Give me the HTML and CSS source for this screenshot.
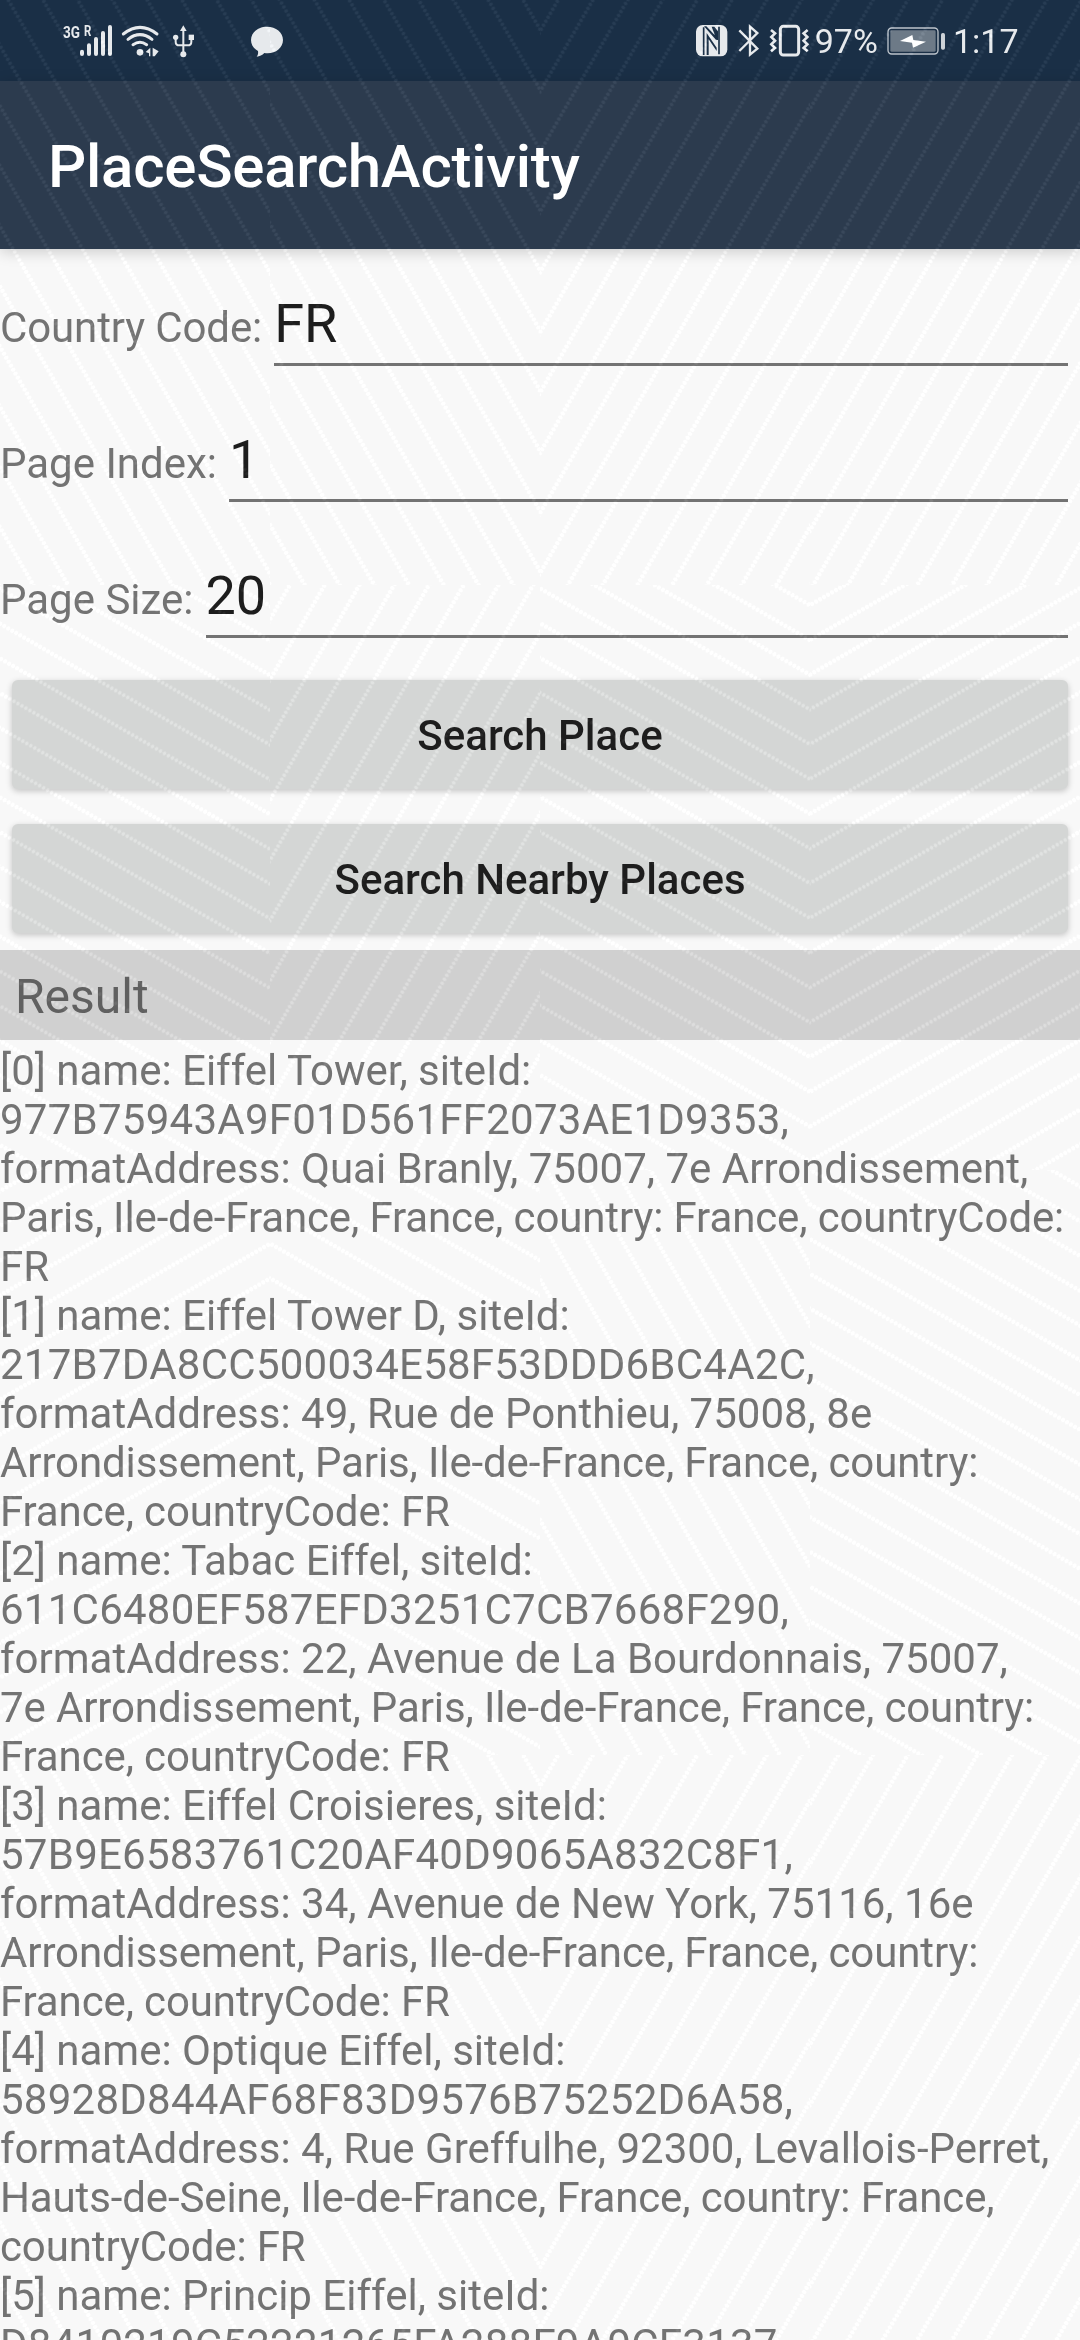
FILE: index.html
```html
<!DOCTYPE html>
<html lang="en">
<head>
<meta charset="utf-8">
<title>PlaceSearchActivity</title>
<link rel="stylesheet" href="styles.css">
</head>
<body>
<div class="screen">
  <header class="status-bar">
    <div class="status-group">
      <svg class="icon signal" viewBox="66 70 156 100">
        <text class="net" x="69" y="113" font-size="52" textLength="51" lengthAdjust="spacingAndGlyphs">3G</text>
        <text class="net" x="132" y="107" font-size="46" textLength="22" lengthAdjust="spacingAndGlyphs">R</text>
        <path d="M126 153v7M147 134v26M168 115v45M189 97v63M210 79v81" stroke="#e6e9ec" stroke-width="12" stroke-linecap="round"/>
      </svg>
      <svg class="icon wifi" viewBox="242 70 116 100" fill="none" stroke="#e6e9ec" stroke-width="9" stroke-linecap="round">
        <path d="M249 100Q299 60 350 100M263 116Q299 88 335 116M278 132Q299 118 319 132"/>
        <circle cx="299" cy="155" r="10" fill="#e6e9ec" stroke="none"/>
        <path d="M316 154l14-13v26h-4v-9zM337 141l18 11-12 15h-6z" fill="#e6e9ec" stroke="none"/>
      </svg>
      <svg class="icon usb" viewBox="395 70 70 100" fill="none" stroke="#e6e9ec" stroke-width="6">
        <path d="M429 88V157M406 115v8q0 11 11 11h25q11 0 11-11v-8"/>
        <path d="M429 74l10 17h-20z" fill="#e6e9ec" stroke="none"/>
        <circle cx="406" cy="110" r="8" fill="#e6e9ec" stroke="none"/>
        <path d="M445 102h16v16h-16z" fill="#e6e9ec" stroke="none"/>
        <circle cx="429" cy="161" r="9" fill="#e6e9ec" stroke="none"/>
      </svg>
      <svg class="icon chat" viewBox="634 70 98 100" fill="#e6e9ec">
        <path d="M682 78c27 0 48 17 48 40s-21 40-46 40c-4 0-7 0-10-1-6 7-14 10-23 11 4-5 5-11 4-17-13-7-21-19-21-33 0-23 21-40 48-40z"/>
      </svg>
    </div>
    <div class="status-group">
      <svg class="icon nfc" viewBox="46 70 96 100">
        <rect x="46" y="73" width="94" height="94" rx="20" fill="#e6e9ec"/>
        <path d="M69 80V163M115 78V161" fill="none" stroke="#1a2f46" stroke-width="5"/>
        <path d="M70 77h7L107 108V119zM78 163V97L108 141V151L84 116V163zM93 78h8L112 92V118h-4z" fill="#1a2f46"/>
      </svg>
      <svg class="icon bt" viewBox="170 70 66 100" fill="none" stroke="#e6e9ec" stroke-width="7">
        <path d="M174 89L228 144L206 162V78L228 97L174 151"/>
      </svg>
      <svg class="icon vibrate" viewBox="264 70 122 100" fill="none" stroke="#e6e9ec">
        <rect x="298" y="77" width="55" height="86" rx="9" stroke-width="9"/>
        <path d="M270 88l12 10-11 11 11 11-11 11 11 11-12 10M380 88l-12 10 11 11-11 11 11 11-11 11 12 10" stroke-width="8"/>
      </svg>
      <span class="percent">97%</span>
      <svg class="icon battery" viewBox="617 70 178 100">
        <rect x="620" y="82" width="150" height="78" rx="11" fill="none" stroke="#bdc4cb" stroke-width="4"/>
        <rect x="627" y="89" width="136" height="64" rx="4" fill="#6d7a87"/>
        <path d="M656 121l37-18 3 15 38 5-39 18-3-15z" fill="#fff"/>
        <rect x="779" y="97" width="12" height="50" rx="5" fill="#cdd2d7"/>
      </svg>
      <span class="clock">1:17</span>
    </div>
  </header>
  <div class="app-bar"><h1>PlaceSearchActivity</h1></div>
  <main>
    <label class="field"><span class="tight">Country Code:</span><span class="value">FR</span></label>
    <label class="field"><span>Page Index:</span><span class="value">1</span></label>
    <label class="field"><span>Page Size:</span><span class="value">20</span></label>
    <div class="actions">
      <button type="button">Search Place</button>
      <button type="button">Search Nearby Places</button>
    </div>
    <h2>Result</h2>
    <p class="results">[0] name: Eiffel Tower, siteId:<br>
<span class="site-id">977B75943A9F01D561FF2073AE1D9353,</span><br>
formatAddress: Quai Branly, 75007, 7e Arrondissement,<br>
<span class="tight">Paris, Ile-de-France, France, country: France, countryCode:</span><br>
FR<br>
[1] name: Eiffel Tower D, siteId:<br>
<span class="site-id">217B7DA8CC500034E58F53DDD6BC4A2C,</span><br>
formatAddress: 49, Rue de Ponthieu, 75008, 8e<br>
<span class="tight">Arrondissement, Paris, Ile-de-France, France, country:</span><br>
<span class="tight">France, countryCode: FR</span><br>
[2] name: Tabac Eiffel, siteId:<br>
<span class="site-id">611C6480EF587EFD3251C7CB7668F290,</span><br>
formatAddress: 22, Avenue de La Bourdonnais, 75007,<br>
<span class="tight">7e Arrondissement, Paris, Ile-de-France, France, country:</span><br>
<span class="tight">France, countryCode: FR</span><br>
[3] name: Eiffel Croisieres, siteId:<br>
<span class="site-id">57B9E6583761C20AF40D9065A832C8F1,</span><br>
formatAddress: 34, Avenue de New York, 75116, 16e<br>
<span class="tight">Arrondissement, Paris, Ile-de-France, France, country:</span><br>
<span class="tight">France, countryCode: FR</span><br>
[4] name: Optique Eiffel, siteId:<br>
<span class="site-id">58928D844AF68F83D9576B75252D6A58,</span><br>
formatAddress: 4, Rue Greffulhe, 92300, Levallois-Perret,<br>
<span class="tight">Hauts-de-Seine, Ile-de-France, France, country: France,</span><br>
<span class="tight">countryCode: FR</span><br>
[5] name: Princip Eiffel, siteId:<br>
<span class="site-id">D8410219C52221265FA288F9A9CF3137,</span></p>
  </main>
  <!-- Dotted watermark: 4 x 4 tiles, each filled with one line direction -->
  <svg class="watermark" viewBox="0 0 1080 2340" aria-hidden="true">
    <defs>
      <pattern id="dots" width="4.6" height="30.1" patternUnits="userSpaceOnUse">
        <ellipse cx="2.3" cy="2.3" rx="1.6" ry="2"/>
      </pattern>
      <pattern id="a0" href="#dots" patternTransform="translate(13.5 250) rotate(60) translate(0 -2.3)"/>
      <pattern id="a1" href="#dots" patternTransform="translate(541 573) rotate(60) translate(0 -2.3)"/>
      <pattern id="a2" href="#dots" patternTransform="translate(540 573) rotate(120) translate(0 -2.3)"/>
      <pattern id="a3" href="#dots" patternTransform="translate(832.7 250) rotate(120) translate(0 -2.3)"/>
      <pattern id="b0" href="#dots" patternTransform="translate(0 693.3) rotate(30) translate(0 -2.3)"/>
      <pattern id="b1" href="#dots" patternTransform="translate(270 860) rotate(120) translate(0 -2.3)"/>
      <pattern id="b2" href="#dots" patternTransform="translate(540 623.3) rotate(30) translate(0 -2.3)"/>
      <pattern id="b3" href="#dots" patternTransform="translate(810 605) rotate(150) translate(0 -2.3)"/>
      <pattern id="c0" href="#dots" patternTransform="translate(270 1243.6) rotate(150) translate(0 -2.3)"/>
      <pattern id="c1" href="#dots" patternTransform="translate(270 1243.6) rotate(30) translate(0 -2.3)"/>
      <pattern id="c2" href="#dots" patternTransform="translate(606 1755) rotate(60) translate(0 -2.3)"/>
      <pattern id="c3" href="#dots" patternTransform="translate(810 1274) rotate(30) translate(0 -2.3)"/>
      <g id="steep">
        <path d="M0 0h270v585H0z" fill="url(#a0)"/>
        <path d="M270 0h270v585H270z" fill="url(#a1)"/>
        <path d="M540 0h270v585H540z" fill="url(#a2)"/>
        <path d="M810 0h270v585H810z" fill="url(#a3)"/>
      </g>
    </defs>
    <use href="#steep"/>
    <path d="M0 585h270v585H0z" fill="url(#b0)"/>
    <path d="M270 585h270v585H270z" fill="url(#b1)"/>
    <path d="M540 585h270v585H540z" fill="url(#b2)"/>
    <path d="M810 585h270v585H810z" fill="url(#b3)"/>
    <path d="M0 1170h270v585H0z" fill="url(#c0)"/>
    <path d="M270 1170h270v585H270z" fill="url(#c1)"/>
    <path d="M540 1170h270v585H540z" fill="url(#c2)"/>
    <path d="M810 1170h270v585H810z" fill="url(#c3)"/>
    <use href="#steep" y="1755"/>
  </svg>
</div>
</body>
</html>
```

FILE: styles.css
```css
* { box-sizing: border-box; }
body { margin: 0; }
.screen {
  position: relative;
  width: 1080px;
  height: 2340px;
  overflow: hidden;
  background: #f8f8f8;
  color: #737373;
  font-family: Roboto, "Noto Sans", sans-serif;
  font-size: 42px;
}
.status-bar {
  display: flex;
  justify-content: space-between;
  height: 81px;
  padding: 0 61px 0 62px;
  background: #1a2f46;
  color: #e6e9ec;
}
.status-group { display: flex; align-items: center; }
.icon { display: block; height: 33.33px; flex: none; overflow: visible; }
.net { fill: #e6e9ec; font-family: Roboto, sans-serif; font-weight: 700; }
.signal { width: 52px; }
.wifi { width: 38.67px; margin-left: 6.67px; }
.usb { width: 23.33px; margin-left: 12.33px; }
.chat { width: 32.67px; margin-left: 56.33px; }
.nfc { width: 32px; }
.bt { width: 22px; margin-left: 9.33px; }
.vibrate { width: 40.67px; margin-left: 9.33px; }
.percent, .clock { font-size: 34px; line-height: 80px; }
.percent { width: 64px; margin-left: 5px; }
.battery { width: 59.33px; margin-left: 8px; }
.clock { width: 66px; margin-left: 7px; }
.app-bar {
  position: relative;
  display: flex;
  align-items: center;
  height: 168px;
  padding: 4px 48px 0;
  background: #2c3b4e;
  box-shadow: 0 3px 14px rgba(0, 0, 0, .18);
}
h1 {
  margin: 0;
  color: #fff;
  font-size: 60px;
  font-weight: 500;
  letter-spacing: -.24px;
  line-height: 70px;
}
.field {
  display: flex;
  align-items: baseline;
  height: 136px;
  padding: 43px 12px 0 0;
  line-height: 49px;
  white-space: nowrap;
}
.value {
  flex: 1;
  height: 74px;
  margin-left: 12px;
  border-bottom: 3px solid #737373;
  color: #1d1d1d;
  font-size: 54px;
  line-height: 64px;
}
.tight { letter-spacing: -.12px; }
.site-id { letter-spacing: .25px; }
.actions { display: grid; gap: 35px; padding: 23px 12px 17px; }
button {
  height: 109px;
  padding: 2px 0 0;
  border: 0;
  border-radius: 6px;
  background: #d4d6d5;
  box-shadow: 0 2px 6px rgba(0, 0, 0, .22);
  color: #1d1d1d;
  font: 500 42px/49px Roboto, sans-serif;
}
h2 {
  height: 90px;
  margin: 0;
  padding: 2px 15px 0;
  background: #d0d0d0;
  color: #606060;
  font-size: 48px;
  font-weight: 400;
  line-height: 90px;
}
.results { margin: 0; padding-top: 6px; line-height: 49px; white-space: nowrap; }
.watermark {
  position: absolute;
  inset: 0;
  width: 1080px;
  height: 2340px;
  fill: #0d0d0d;
  mix-blend-mode: plus-lighter;
  pointer-events: none;
}
```
